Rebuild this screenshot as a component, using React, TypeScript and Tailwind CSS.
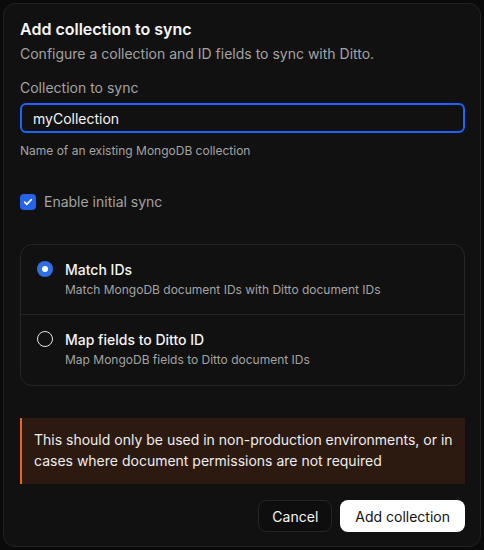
import React from "react";

export default function App() {
  return (
    <div className="w-[484px] h-[550px] bg-[#0a0a0a] pl-[3px] pt-[3px] pr-[3px]" style={{ fontFamily: "Inter, 'Noto Sans', sans-serif" }}>
      <div className="h-[544px] rounded-[12px] border border-[#222] bg-[#111111] pl-[16px] pr-[15px] pt-[14px]">
        <h2 className="text-[16px] leading-[22px] font-semibold text-[#f5f5f5]">Add collection to sync</h2>
        <p className="mt-[4px] text-[14px] leading-[20px] text-[#a3a3a3]">Configure a collection and ID fields to sync with Ditto.</p>

        <div className="mt-[14px] text-[14px] leading-[20px] text-[#a3a3a3]">Collection to sync</div>
        <div className="mt-[5px] h-[30px] rounded-[6px] border-2 border-[#1f63ff] flex items-center px-[11px] text-[14px] text-[#f5f5f5]">
          myCollection
        </div>
        <div className="mt-[10px] text-[12px] leading-[16px] text-[#a3a3a3]">Name of an existing MongoDB collection</div>

        <div className="mt-[32px] flex items-center gap-[8px]">
          <div className="w-[16px] h-[16px] rounded-[4px] bg-[#2563eb] flex items-center justify-center">
            <svg width="10" height="10" viewBox="0 0 24 24" fill="none" stroke="white" strokeWidth="4" strokeLinecap="round" strokeLinejoin="round">
              <path d="M4 12.5l5 5L20 6.5" />
            </svg>
          </div>
          <span className="text-[14px] text-[#a3a3a3]">Enable initial sync</span>
        </div>

        <div className="mt-[32px] rounded-[12px] border border-[#262626]">
          <div className="h-[70px] border-b border-[#262626] flex items-start gap-[12px] pl-[16px] pt-[15px]">
            <div className="mt-[1px] w-[16px] h-[16px] rounded-full bg-[#2f6fe4] flex items-center justify-center">
              <div className="w-[6px] h-[6px] rounded-full bg-white" />
            </div>
            <div>
              <div className="text-[14px] leading-[20px] font-medium text-[#f5f5f5]">Match IDs</div>
              <div className="text-[12px] leading-[16px] mt-[2px] text-[#a3a3a3]">Match MongoDB document IDs with Ditto document IDs</div>
            </div>
          </div>
          <div className="h-[70px] flex items-start gap-[12px] pl-[16px] pt-[15px]">
            <div className="mt-[1px] w-[16px] h-[16px] rounded-full border border-[#e5e5e5]" />
            <div>
              <div className="text-[14px] leading-[20px] font-medium text-[#f5f5f5]">Map fields to Ditto ID</div>
              <div className="text-[12px] leading-[16px] mt-[2px] text-[#a3a3a3]">Map MongoDB fields to Ditto document IDs</div>
            </div>
          </div>
        </div>

        <div className="mt-[32px] h-[66px] border-l-2 border-[#e8631f] bg-[#2c1a11] pl-[12px] pr-[8px] pt-[11px] text-[14px] leading-[21px] text-[#ededed]">
          This should only be used in non-production environments, or in cases where document permissions are not required
        </div>

        <div className="mt-[16px] flex justify-end gap-[8px]">
          <button className="h-[32px] px-[13px] rounded-[8px] border border-[#262626] bg-[#0e0e0e] text-[14px] text-[#f5f5f5]">Cancel</button>
          <button className="h-[32px] px-[15px] rounded-[8px] bg-white text-[14px] text-[#111]">Add collection</button>
        </div>
      </div>
    </div>
  );
}
